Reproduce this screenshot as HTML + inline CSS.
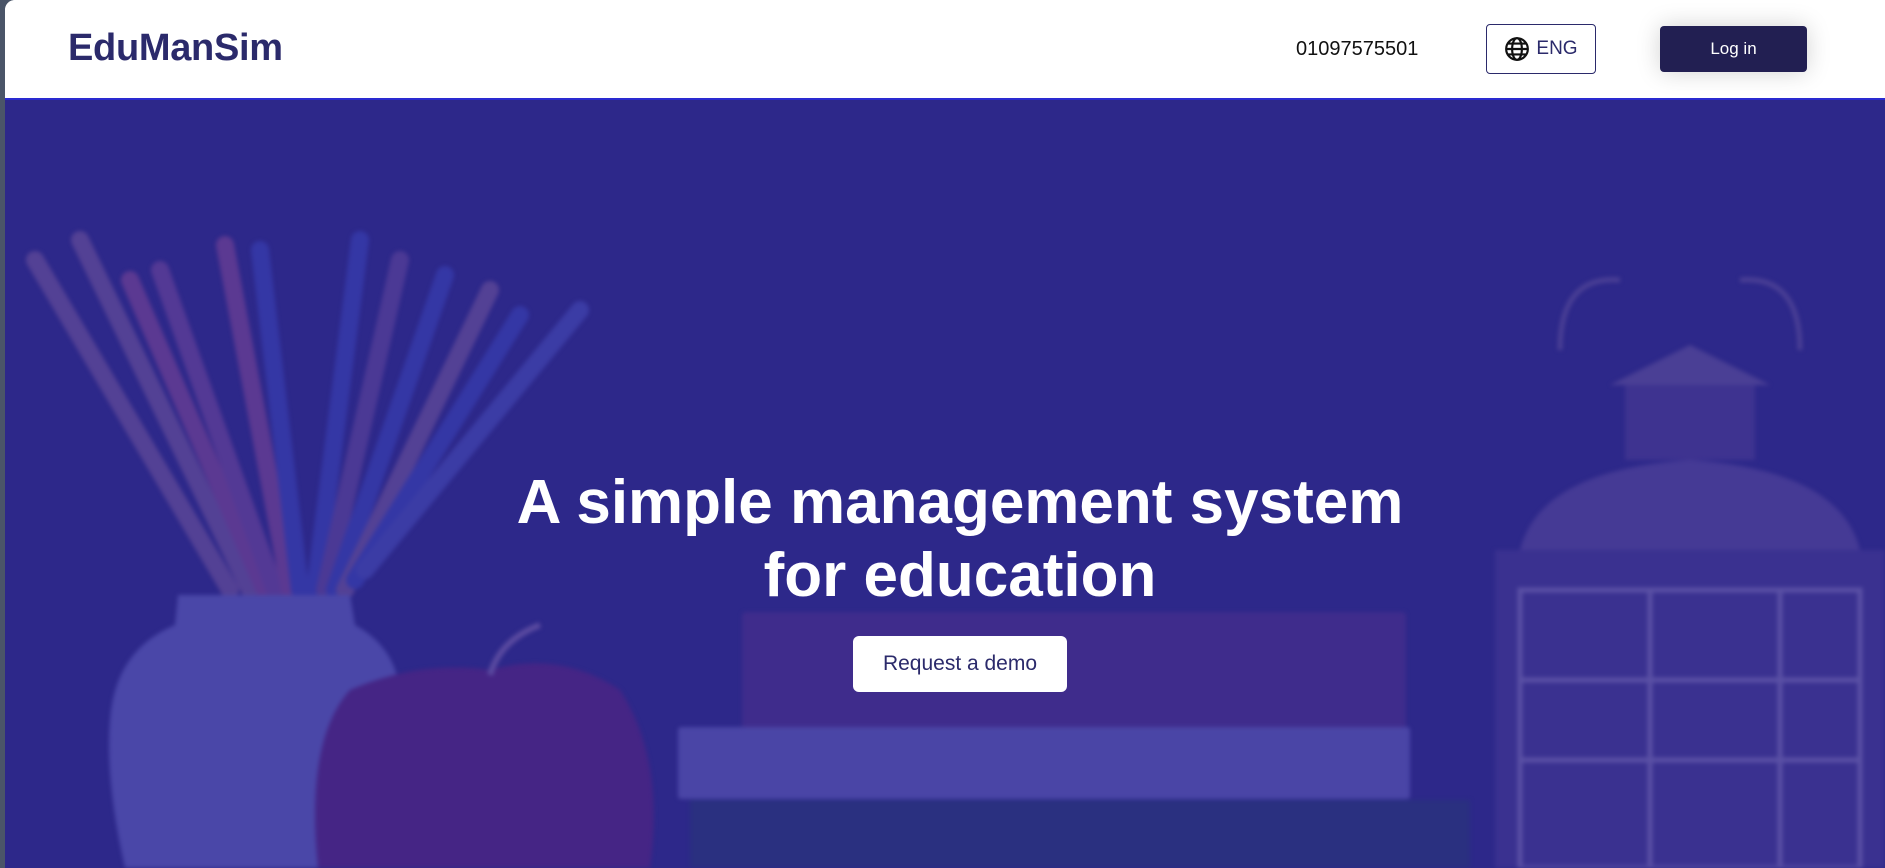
<!DOCTYPE html>
<html><head><meta charset="utf-8"><style>
*{margin:0;padding:0;box-sizing:border-box}
body{width:1885px;height:868px;overflow:hidden;background:#4a5568;font-family:"Liberation Sans",sans-serif}
.page{position:absolute;left:5px;top:0;width:1880px;height:868px;background:#fff;border-top-left-radius:10px;overflow:hidden}
header{position:absolute;left:0;top:0;width:100%;height:100px;background:#fff;border-bottom:2px solid #2a2ad0}
.logo{position:absolute;left:63px;top:27px;font-size:38px;font-weight:bold;color:#2b2a6b;letter-spacing:-0.3px}
.phone{position:absolute;left:1291px;top:38px;font-size:20px;color:#111}
.eng{position:absolute;left:1481px;top:24px;width:110px;height:50px;border:1px solid #2b2a6b;border-radius:4px;display:flex;align-items:center;justify-content:center;gap:6px;font-size:19px;color:#2b2a6b;background:#fff}
.login{position:absolute;left:1655px;top:26px;width:147px;height:46px;background:#221f52;border-radius:4px;color:#fff;font-size:17px;display:flex;align-items:center;justify-content:center;box-shadow:0 0 24px rgba(0,0,0,.18)}
.hero{position:absolute;left:0;top:100px;width:100%;height:768px;background:#2d288a}
h1{position:absolute;text-align:center;color:#fff;font-size:62px;line-height:73px;font-weight:bold}
.demo{position:absolute;left:848px;top:536px;width:214px;height:56px;background:#fff;border-radius:6px;color:#2b2a6b;font-size:21px;display:flex;align-items:center;justify-content:center}
</style></head><body><div class="page">
<div class="hero">
<svg width="1880" height="768" viewBox="5 100 1880 768" style="position:absolute;left:0;top:0;filter:blur(2px)">
<g stroke-width="18" stroke-linecap="round" opacity=".5">
<line x1="35" y1="260" x2="230" y2="590" stroke="#7a5aa0"/>
<line x1="80" y1="240" x2="250" y2="590" stroke="#7a5aa0"/>
<line x1="130" y1="280" x2="265" y2="590" stroke="#8a4a9a"/>
<line x1="160" y1="270" x2="275" y2="590" stroke="#7a4aa0"/>
<line x1="225" y1="245" x2="290" y2="590" stroke="#8a4a9a"/>
<line x1="260" y1="250" x2="300" y2="590" stroke="#3c46c0"/>
<line x1="360" y1="240" x2="315" y2="590" stroke="#3c46c0"/>
<line x1="400" y1="260" x2="325" y2="590" stroke="#6a4aa0"/>
<line x1="445" y1="275" x2="335" y2="590" stroke="#3c46c0"/>
<line x1="490" y1="290" x2="345" y2="590" stroke="#7a5aa0"/>
<line x1="520" y1="315" x2="355" y2="580" stroke="#3c46c0"/>
<line x1="580" y1="310" x2="365" y2="570" stroke="#4a50c0"/>
</g>
<path d="M178 595 L350 595 L355 625 Q400 650 400 700 Q400 800 370 868 L125 868 Q105 780 110 720 Q115 650 175 625 Z" fill="#4a47a8"/>
<path d="M490 670 Q560 650 620 690 Q665 760 650 868 L318 868 Q305 740 350 690 Q420 660 490 670Z" fill="#452585"/>
<path d="M490 675 Q500 640 540 625" stroke="#5a4aa0" stroke-width="6" fill="none"/>
<rect x="742" y="612" width="664" height="122" rx="4" fill="#3f2c8c"/>
<rect x="678" y="727" width="732" height="72" rx="3" fill="#4a45a6"/>
<rect x="690" y="800" width="780" height="68" fill="#2a3080"/>
<path d="M1560 350 Q1560 275 1620 280 M1740 280 Q1800 275 1800 350" stroke="#4a3f95" stroke-width="5" fill="none"/>
<path d="M1610 385 L1690 345 L1770 385 Z" fill="#4a3f95"/>
<rect x="1625" y="385" width="130" height="75" fill="#3e3390"/>
<path d="M1520 550 Q1540 470 1690 460 Q1840 470 1860 550 Z" fill="#453a95"/>
<rect x="1495" y="550" width="390" height="318" fill="#3a3190"/>
<g stroke="#5a50a5" stroke-width="5" fill="none"><rect x="1520" y="590" width="340" height="278"/><line x1="1650" y1="590" x2="1650" y2="868"/><line x1="1780" y1="590" x2="1780" y2="868"/><line x1="1520" y1="680" x2="1860" y2="680"/><line x1="1520" y1="760" x2="1860" y2="760"/></g>
</svg>
<h1 style="left:-5px;width:1920px;top:366px">A simple management system<br>for education</h1>
<div class="demo">Request a demo</div>
</div>
<header>
<div class="logo">EduManSim</div>
<div class="phone">01097575501</div>
<div class="eng"><svg width="26" height="26" viewBox="0 0 24 24" fill="none" stroke="#111" stroke-width="2"><circle cx="12" cy="12" r="10"/><ellipse cx="12" cy="12" rx="4.5" ry="10"/><line x1="2" y1="12" x2="22" y2="12"/><path d="M4 7h16M4 17h16"/></svg>ENG</div>
<div class="login">Log in</div>
</header>
</div></body></html>
